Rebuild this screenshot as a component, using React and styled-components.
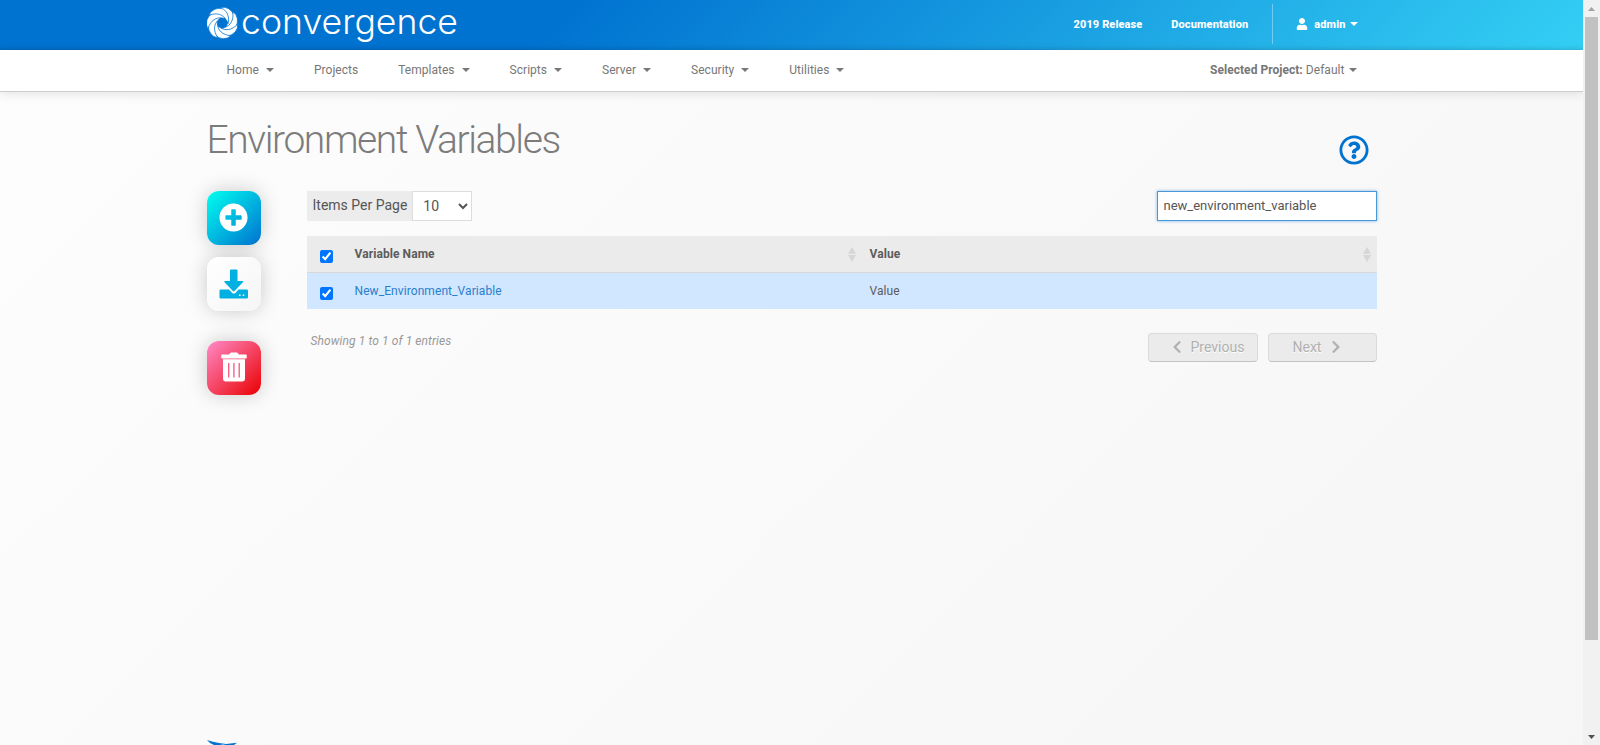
import React from 'react';
import styled, { createGlobalStyle } from 'styled-components';
import { FaPlusCircle, FaRegQuestionCircle, FaUser, FaChevronLeft, FaChevronRight } from 'react-icons/fa';

const GlobalStyle = createGlobalStyle`
  *, *::before, *::after { box-sizing: border-box; }
  html, body { margin: 0; height: 100%; overflow: hidden; }
  body {
    font-family: Roboto, 'Liberation Sans', sans-serif;
    font-size: 12px;
    color: #555;
  }
`;

const Window = styled.div`
  display: flex;
  width: 1600px;
  height: 745px;
  overflow: hidden;
`;

const Page = styled.div`
  width: 1583px;
  height: 745px;
  overflow: hidden;
  display: flex;
  flex-direction: column;
  background: linear-gradient(135deg, #fdfdfd 0%, #f6f6f6 100%);
`;

const Container = styled.div`
  width: 1170px;
  margin: 0 auto;
  display: flex;
  flex-shrink: 0;
`;

const TopBar = styled.header`
  height: 50px;
  flex-shrink: 0;
  background: linear-gradient(135deg, #0072d0 0%, #0072d0 35%, #34cff4 100%);
  box-shadow: inset 0 -4px 4px -3px rgba(0, 0, 0, 0.12);
`;

const Brand = styled.div`
  display: flex;
  height: 50px;
  flex: 1;
  svg { display: block; }
`;

const TopLinks = styled.nav`
  display: flex;
  height: 50px;
  color: #fff;
  font-size: 11px;
  font-weight: 800;
  letter-spacing: 0.1px;
  line-height: 49px;
`;

const TopLink = styled.a`
  margin-right: ${(p) => p.$gap}px;
`;

const UserMenu = styled.div`
  display: flex;
  align-items: center;
  height: 40px;
  margin-top: 4px;
  padding: 0 19px 0 23px;
  line-height: 41px;
  border-left: 1px solid rgba(255, 255, 255, 0.35);
  svg { margin-right: 6px; }
`;

const Caret = styled.span`
  display: inline-block;
  margin-left: ${(p) => p.$gap || 4}px;
  margin-bottom: ${(p) => p.$lift ?? 2}px;
  vertical-align: middle;
  border-top: 4px solid currentColor;
  border-left: 4px solid transparent;
  border-right: 4px solid transparent;
`;

const NavBar = styled.div`
  height: 42px;
  flex-shrink: 0;
  background: #fff;
  border-bottom: 1px solid #ccc;
  box-shadow: 0 2px 10px rgba(0, 0, 0, 0.1);
`;

const Menu = styled.nav`
  display: flex;
  gap: 40px;
  flex: 1;
  padding-left: 20px;
  color: #777;
  line-height: 40px;
  letter-spacing: 0.03px;
`;

const Project = styled.div`
  padding-right: 20px;
  color: #777;
  line-height: 40px;
  letter-spacing: 0.04px;
`;

const TitleRow = styled.div`
  display: flex;
  justify-content: space-between;
  width: 1170px;
  height: 99px;
  padding: 23px 8px 0 0;
  color: #0072d0;
  svg { margin-top: 20px; }
`;

const Title = styled.h1`
  margin: 0;
  color: #7c7c7c;
  font-size: 39px;
  font-weight: 300;
  line-height: 50px;
  letter-spacing: -1.4px;
`;

const Actions = styled.aside`
  width: 100px;
  display: flex;
  flex-direction: column;
  gap: 12px;
`;

const faces = {
  add: 'linear-gradient(135deg, #00fff0 0%, #0072d0 100%)',
  plain: 'linear-gradient(135deg, #ffffff 0%, #f5f5f5 100%)',
  remove: 'linear-gradient(135deg, #ff8ac8 0%, #ea0000 100%)',
};

const ActionButton = styled.button`
  display: flex;
  align-items: center;
  justify-content: center;
  width: 54px;
  height: 54px;
  margin: ${(p) => (p.$face === 'remove' ? '18px' : '0')} 0 0;
  padding: 0 0 ${(p) => (p.$face === 'plain' ? 1 : 2)}px;
  border: 0;
  border-radius: 12px;
  color: ${(p) => (p.$face === 'plain' ? '#00b0e0' : '#fff')};
  background: ${(p) => faces[p.$face]};
  box-shadow: 0 0 20px rgba(0, 0, 0, 0.2);
`;

const Content = styled.main`
  width: 1070px;
`;

const Controls = styled.div`
  display: flex;
  justify-content: space-between;
  height: 45px;
`;

const PageSize = styled.label`
  display: flex;
  height: 30px;
  padding-left: 6px;
  background: #ececec;
  font-size: 14px;
  line-height: 28px;
`;

const SizeSelect = styled.select`
  width: 60px;
  height: 30px;
  margin-left: 5px;
  padding: 0 0 0 6px;
  border: 1px solid #ddd;
  border-radius: 0;
  background-color: #fff;
  color: #555;
  font: 14px Roboto, sans-serif;
`;

const Search = styled.input`
  width: 220px;
  height: 30px;
  padding: 0 6px 2px;
  border: 1px solid #4a97d9;
  border-radius: 0;
  outline: 0;
  box-shadow: 0 0 3px rgba(0, 114, 208, 0.5);
  color: #555;
  font: 13px Roboto, sans-serif;
`;

const Row = styled.div`
  display: grid;
  grid-template-columns: 38px 515px 1fr;
  height: ${(p) => (p.$head ? 37 : 36)}px;
  line-height: 36px;
  letter-spacing: 0.08px;
  font-weight: ${(p) => (p.$head ? 700 : 400)};
  background: ${(p) => (p.$head ? '#ebebeb' : '#d1e6ff')};
  border-bottom: ${(p) => (p.$head ? '1px solid #d8d8d8' : '0')};
`;

const Cell = styled.div`
  display: flex;
  justify-content: space-between;
  padding: 0 ${(p) => p.$end || 5.5}px 0 10px;
  color: ${(p) => (p.$link ? '#2a7fcb' : '#5c5c5c')};
  svg { margin-top: 11px; }
`;

const Check = styled.input.attrs({ type: 'checkbox' })`
  width: 13px;
  height: 13px;
  margin: 14px 0 0 13px;
`;

const Footer = styled.div`
  display: flex;
  justify-content: space-between;
  padding-top: 24px;
`;

const Info = styled.div`
  padding-left: 4px;
  color: #999;
  font-style: italic;
  line-height: 16px;
  letter-spacing: 0.1px;
`;

const Pager = styled.div`
  display: flex;
  gap: 10px;
`;

const PageButton = styled.button`
  display: flex;
  align-items: center;
  width: ${(p) => p.$width}px;
  height: 29px;
  padding: 0 0 2px ${(p) => p.$inset}px;
  gap: ${(p) => p.$gap}px;
  border: 1px solid #dadada;
  border-bottom-color: #c4c4c4;
  border-radius: 4px;
  background: #ebebeb;
  color: #b0b0b0;
  font: 14px Roboto, sans-serif;
  text-shadow: 0 1px 0 #fff;
`;

const FooterMark = styled.div`
  width: 1170px;
  margin: auto auto 0;
  height: 5px;
  svg { display: block; }
`;

const Scrollbar = styled.div`
  display: flex;
  flex-direction: column;
  align-items: center;
  width: 17px;
  height: 745px;
  background: #f1f1f1;
`;

const ScrollArrow = styled.div`
  display: flex;
  align-items: center;
  justify-content: center;
  height: 17px;
`;

const Thumb = styled.div`
  width: 13px;
  height: 623px;
  margin-bottom: auto;
  background: #c1c1c1;
`;

const BLADES = [0, 1, 2, 3, 4, 5, 6].map((i) => (i * 360) / 7 + 12);

const Logo = () => (
  <svg width="260" height="50" viewBox="0 0 260 50">
    <g transform="translate(15.3 23)" fill="#fff" stroke="#0072d0" strokeWidth="0.7">
      {BLADES.map((a) => (
        <path key={a} transform={`rotate(${a})`} d="M-5.500 -14.500A11.500 12 0 0 1 9.600 -10.200C11.300 -4.800 8.600 .950 3.900 4.200Q5.200 2 5 0C6 -6 3 -11.500 -5.500 -14.500Z" />
      ))}
    </g>
    <text x="34" y="33.500" fill="#fff" fontFamily="Inter, sans-serif" fontWeight="300" fontSize="35" textLength="217" lengthAdjust="spacingAndGlyphs">
      convergence
    </text>
  </svg>
);

const DownloadIcon = () => (
  <svg width="30" height="30" viewBox="0 0 30 30" fill="currentColor">
    <path d="M12 .5h5.500q1 0 1 1v10.500h5q1.400 0 .4 1.200L15.500 22q-.8.8-1.600 0L5.600 13.200q-1-1.200.4-1.200h5V1.500q0-1 1-1Z" />
    <path fillRule="evenodd" d="M1.800 20.500H10l3.200 3.400q1.600 1.300 3.200 0L19.600 20.500h8.100q1.300 0 1.300 1.300v6.400q0 1.300-1.300 1.300H1.800Q.5 29.500 .5 28.200V21.800Q.5 20.500 1.800 20.500ZM20 25.500v1.500h1.600V25.500ZM23.700 25.500v1.500h1.600V25.500Z" />
  </svg>
);

const TrashIcon = () => (
  <svg width="26" height="30" viewBox="0 0 26 30">
    <path fill="currentColor" d="M.9 2.600h7.300L9.300.900q.2-.4.8-.4h5.800q.6 0 .8.400l1.100 1.700h7.300q.6 0 .6.600V5.800q0 .6-.6.600H.9q-.6 0-.6-.6V3.200q0-.6.6-.6ZM2 7.300h22v19.800q0 2.400-2.400 2.400H4.400Q2 29.500 2 27.100Z" />
    <path stroke="#f2587c" strokeWidth="1.300" d="M7.700 11v14.500M12.900 11v14.500M18.200 11v14.500" />
  </svg>
);

const SortIcon = () => (
  <svg width="8" height="15" viewBox="0 0 8 15" fill="#d6d6d6">
    <path d="M4 0 8 6.800H0ZM0 8h8L4 15Z" />
  </svg>
);

const MENU = [
  ['Home', true],
  ['Projects', false],
  ['Templates', true],
  ['Scripts', true],
  ['Server', true],
  ['Security', true],
  ['Utilities', true],
];

export default function App() {
  return (
    <Window>
      <GlobalStyle />
      <Page>
        <TopBar>
          <Container>
            <Brand><Logo /></Brand>
            <TopLinks>
              <TopLink $gap={29}>2019 Release</TopLink>
              <TopLink $gap={24}>Documentation</TopLink>
              <UserMenu><FaUser size={12} />admin<Caret $lift={0} /></UserMenu>
            </TopLinks>
          </Container>
        </TopBar>
        <NavBar>
          <Container>
            <Menu>
              {MENU.map(([name, opens]) => (
                <span key={name}>{name}{opens && <Caret $gap={7} />}</span>
              ))}
            </Menu>
            <Project><b>Selected Project:</b> Default<Caret /></Project>
          </Container>
        </NavBar>
        <Container>
          <TitleRow>
            <Title>Environment Variables</Title>
            <FaRegQuestionCircle size={30} />
          </TitleRow>
        </Container>
        <Container>
          <Actions>
            <ActionButton $face="add"><FaPlusCircle size={29} /></ActionButton>
            <ActionButton $face="plain"><DownloadIcon /></ActionButton>
            <ActionButton $face="remove"><TrashIcon /></ActionButton>
          </Actions>
          <Content>
            <Controls>
              <PageSize>
                Items Per Page
                <SizeSelect defaultValue="10"><option>10</option></SizeSelect>
              </PageSize>
              <Search defaultValue="new_environment_variable" />
            </Controls>
            <Row $head>
              <Check defaultChecked />
              <Cell $end={3.5}>Variable Name<SortIcon /></Cell>
              <Cell>Value<SortIcon /></Cell>
            </Row>
            <Row>
              <Check defaultChecked />
              <Cell $link>New_Environment_Variable</Cell>
              <Cell>Value</Cell>
            </Row>
            <Footer>
              <Info>Showing 1 to 1 of 1 entries</Info>
              <Pager>
                <PageButton $width={110} $inset={21} $gap={7}><FaChevronLeft size={14} />Previous</PageButton>
                <PageButton $width={109} $inset={24} $gap={8}>Next<FaChevronRight size={14} /></PageButton>
              </Pager>
            </Footer>
          </Content>
        </Container>
        <FooterMark>
          <svg width="32" height="5" viewBox="0 0 32 5" fill="#0072d0">
            <path d="M0 0Q6 2.200 12 2.900L19 4L30 2.800L27 5H19L16 4.500L13 5H7Q2 3 0 0Z" />
          </svg>
        </FooterMark>
      </Page>
      <Scrollbar>
        <ScrollArrow>
          <svg width="7" height="4" viewBox="0 0 7 4" fill="#a3a3a3"><path d="M3.500 0 7 4H0Z" /></svg>
        </ScrollArrow>
        <Thumb />
        <ScrollArrow>
          <svg width="7" height="4" viewBox="0 0 7 4" fill="#505050"><path d="M0 0H7L3.500 4Z" /></svg>
        </ScrollArrow>
      </Scrollbar>
    </Window>
  );
}
